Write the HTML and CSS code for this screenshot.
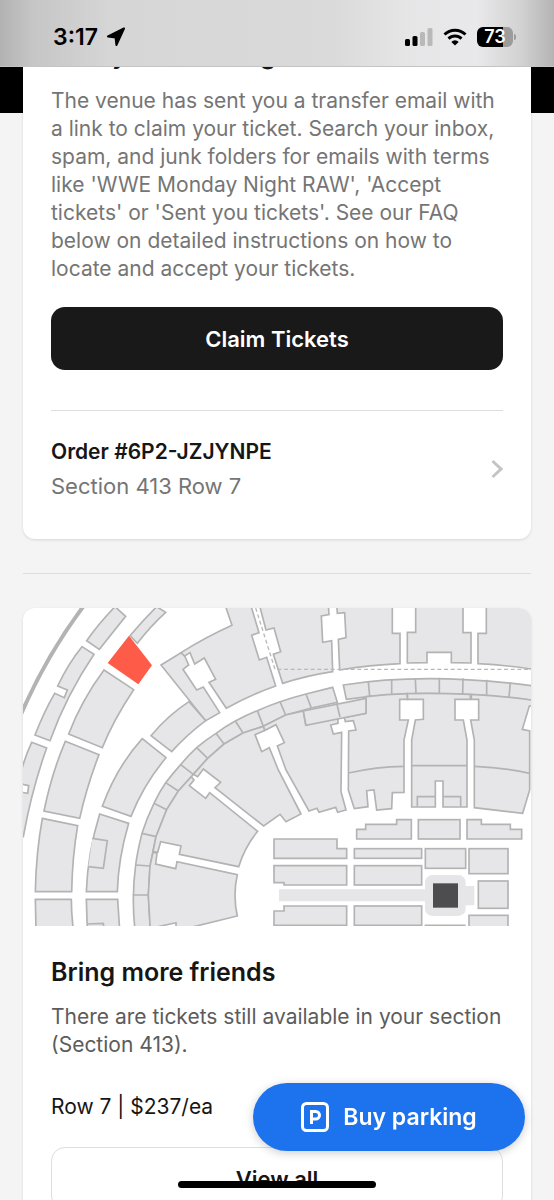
FILE: index.html
```html
<!DOCTYPE html>
<html lang="en">
<head>
  <meta charset="UTF-8">
  <meta name="viewport" content="width=device-width, initial-scale=1.0">
  <title>Your tickets</title>
  <link rel="stylesheet" href="styles.css">
</head>
<body>
  <header class="status-bar">
    <div class="status-group">
      <span class="time">3:17</span>
      <svg class="location" width="20" height="20" viewBox="0 0 20 20" aria-hidden="true">
        <path d="M18 1.500 2 9.500 9.600 10.600 10.400 18Z"/>
      </svg>
    </div>
    <div class="status-group">
      <svg width="28" height="18" viewBox="0 0 28 18" aria-hidden="true">
        <rect x="0" y="11" width="5" height="7" rx="1.500"/>
        <rect x="7.500" y="8" width="5" height="10" rx="1.500"/>
        <rect class="dim" x="15" y="4" width="5" height="14" rx="1.500"/>
        <rect class="dim" x="22.500" y="0" width="5" height="18" rx="1.500"/>
      </svg>
      <svg class="wifi" width="24" height="18" viewBox="0 0 24 18" aria-hidden="true">
        <path class="wave" d="M1.500 6.500a15 15 0 0 1 21 0M5.500 10.600a9.200 9.200 0 0 1 13 0"/>
        <path d="M12 17.600 8.300 13.900a5.200 5.200 0 0 1 7.400 0z"/>
      </svg>
      <div class="battery">73</div>
    </div>
  </header>

  <main class="page">
    <section class="card claim">
      <h2 class="title">Ready for claiming</h2>
      <p class="text muted">The venue has sent you a transfer email with a link to claim your ticket. Search your inbox, spam, and junk folders for emails with terms like 'WWE Monday Night RAW', 'Accept tickets' or 'Sent you tickets'. See our FAQ below on detailed instructions on how to locate and accept your tickets.</p>
      <button type="button" class="btn btn-dark">Claim Tickets</button>
      <a href="#" class="order">
        <span>
          <strong class="order-number">Order #6P2-JZJYNPE</strong>
          <span class="order-seat">Section 413 Row 7</span>
        </span>
        <svg width="12" height="20" viewBox="0 0 12 20" aria-hidden="true">
          <path d="M1.500 2 10 10l-8.500 8"/>
        </svg>
      </a>
    </section>

    <hr class="divider">

    <section class="card">
      <svg class="map" viewBox="9 24 1524 954" role="img" aria-label="Seat map">
        <path class="wall" d="M194 14Q80 165 2 345"/>

        <!-- outer rings -->
        <g class="seats">
          <path d="M285 20 317 49 238 148 200 122Q235 72 285 20Z"/>
          <path d="M186 140 222 163Q140 285 90 422L45 405Q72 335 104 280L133 293 142 270 113 258Q145 190 186 140Z"/>
          <path d="M35 427 80 444Q35 570 10 710L-10 710V574L23 580 26 557-5 550Q10 480 35 427Z"/>
          <path d="M252 210 341 269Q280 360 247 443L146 402Q185 300 252 210Z"/>
          <path d="M136 424 237 464Q200 560 179 655L72 633Q95 520 136 424Z"/>
          <path d="M67 655 173 677Q157 770 155 875H46Q48 760 67 655Z"/>
          <path d="M46 898H154Q154 940 160 990H48Z"/>
          <path d="M410 20 437 37Q390 80 352 130L330 107Q370 60 410 20Z"/>
          <path d="M423 195 483 158 494 168 506 195 489 208 530 270 550 261 599 338 557 362Z"/>
          <path d="M483 158Q560 110 636 76L615 14H692L717 98 695 106 718 180 740 172 767 258Q690 285 619 325L567 247 587 238 553 174 524 192 510 158 494 168Z"/>
          <path d="M507 305 557 362Q500 405 455 455L393 407Q445 345 507 305Z"/>
          <path d="M367 416 438 473Q370 555 333 649L247 619Q290 500 367 416Z"/>
          <path d="M239 642 326 670Q295 775 292 875H199Q203 760 239 642Z"/>
          <path d="M217 715 262 722 250 805 205 800"/>
          <path d="M199 898H293L299 990H202Z"/>
          <path d="M202 972 250 970 252 990"/>
          <path d="M718 14 738 90 762 84 782 155 760 163 788 250Q860 227 938 215L935 122 908 127 904 48 927 44 925 14Z"/>
          <path d="M950 14 952 40 974 38 978 113 955 118 959 210Q1050 195 1140 191V100H1117V14Z"/>
          <path d="M1187 14V97H1162V189L1221 188V157H1294V188L1353 189V98H1329V14Z"/>
          <path d="M1399 14V100H1374V191Q1455 195 1540 208V14Z"/>
        </g>
        <path class="dashes" d="M707 24 765 208H1540"/>

        <!-- suites -->
        <g class="seats">
          <path d="M345 990Q334 890 347 795 352 755 366 700 380 655 402 610 417 577 437 548 457 522 482 494 505 466 530 443 557 420 588 400 615 380 646 363 680 345 712 332 780 302 858 282L938 262 952 307 874 324 797 345 730 379 669 399 612 432 563 475 520 523 475 573 440 629 408 710 390 798 385 885 391 990Z"/>
          <path d="M338 885H385M347 795 390 798M366 700 408 710M402 610 440 629M437 548 475 573M482 494 520 523M530 443 563 475M588 400 612 432M646 363 669 399M712 332 730 379M780 305 797 345M858 282 874 324"/>
          <path d="M970 255Q1220 215 1540 258V301Q1220 262 979 298Z"/>
          <path d="M1045 245 1049 289M1115 238V284M1186 235 1188 282M1258 233V281M1329 235 1328 283M1400 239V285M1471 247 1467 291"/>
        </g>

        <!-- lower bowl -->
        <g class="seats">
          <path d="M391 990 385 885 390 798 399 757 411 759 407 792 467 806 471 785 652 824Q638 885 652 948L480 990H468V968L405 982Z"/>
          <path d="M399 755 413 757 422 725 483 738 478 763 656 800Q675 740 713 694L569 578 557 595 508 557 522 540 514 530 475 573 440 629 408 710Z"/>
          <path d="M520 523 563 475 612 432 669 399 730 379 735 391 705 404 725 455 748 443 775 510 843 642 798 665 780 643 731 678 585 563 602 547 550 507 533 530Z"/>
          <path d="M730 379 797 345 850 333 857 375 953 352 954 370 932 375 940 402 965 397 963 575 978 630 953 637 947 622 897 637 891 625 867 633 798 510 772 438 793 428 768 374 735 391Z"/>
          <path d="M1038 290Q1100 283 1162 281V298H1139V360H1165L1152 420V577L1117 578 1115 626 1070 630 1062 570 1040 572 1044 620 1003 626 985 570 986 393 1008 390 1000 362 976 365 973 352 1038 340Z"/>
          <path d="M850 333 1038 295V340L858 376ZM950 309 960 351"/>
          <path d="M1162 281Q1250 279 1351 283V298H1305V360H1330L1341 420V621H1269V543H1246V621H1175V420L1186 360 1210 358V298H1163Z"/>
          <path d="M1192 621V590H1246M1269 590H1322V621"/>
          <path d="M1354 283Q1450 288 1540 301V318H1528L1507 388 1529 393V570L1508 640 1363 623V420L1352 360H1376V298H1354Z"/>
          <path class="line" d="M985 519Q1070 500 1152 499M1175 497H1341M1363 499Q1450 502 1529 520"/>
        </g>

        <!-- floor -->
        <g class="seats">
          <path d="M762 717H951V746H980V775H762Z"/>
          <path d="M762 797H980V855H792V848H762Z"/>
          <path d="M762 933H792V918H980V976H762Z"/>
          <path d="M1010 717V688H1037V673H1130V659H1174V717Z"/>
          <path d="M1341 659H1384V673H1471V688H1505V717H1341Z"/>
          <rect x="1195" y="659" width="125" height="58"/>
          <rect x="1003" y="746" width="202" height="29"/>
          <rect x="1003" y="797" width="202" height="58"/>
          <rect x="1003" y="918" width="202" height="58"/>
          <rect x="1216" y="746" width="121" height="59"/>
          <rect x="1347" y="746" width="117" height="75"/>
          <rect x="1375" y="843" width="89" height="82"/>
          <rect x="1347" y="946" width="117" height="50"/>
          <path d="M1214 976H1337"/>
        </g>
        <path class="stage" d="M777 868H1217V904H777ZM1320 858H1363V916H1320Z"/>
        <rect class="stage" x="1215" y="825" width="122" height="123" rx="22"/>
        <rect class="ring" x="1239" y="850" width="75" height="73"/>
        <path class="selected" d="M327 107 396 196 355 253 263 189Z"/>
      </svg>
      <div class="more">
        <h2 class="title">Bring more friends</h2>
        <p class="text">There are tickets still available in your section (Section 413).</p>
        <p class="price">Row 7 | $237/ea</p>
        <button type="button" class="btn btn-outline">View all</button>
      </div>
    </section>
  </main>

  <button type="button" class="parking">
    <svg width="28" height="30" viewBox="0 0 28 30" aria-hidden="true">
      <rect x="1.500" y="1.500" width="25" height="27" rx="4"/>
      <path d="M10.500 22V9.500h4.200a3.800 3.800 0 0 1 0 7.600h-4.200"/>
    </svg>
    Buy parking
  </button>
  <div class="home-indicator"></div>
</body>
</html>
```
FILE: styles.css
```css
* {
  box-sizing: border-box;
  margin: 0;
  padding: 0;
}

body {
  height: 100vh;
  overflow: hidden;
  background-color: #f4f4f4;
  color: #161616;
  font-family: "Inter", "Liberation Sans", sans-serif;
}

button {
  font-family: inherit;
  cursor: pointer;
}

.status-bar {
  position: relative;
  z-index: 2;
  height: 67px;
  padding: 8px 41px 0 53px;
  display: flex;
  align-items: center;
  justify-content: space-between;
  background: linear-gradient(90deg, #b2b2b2 0, #c6c6c6 6%, #d6d6d6 20%, #dadada 60%, #e6e6e7 74%, #e9e9eb 86%, #d2d2d2 94%, #b4b4b4 100%);
  border-bottom: 1px solid #c4c4c4;
}

.status-group {
  display: flex;
  align-items: center;
  gap: 10px;

  & .time {
    font-size: 23px;
    font-weight: 600;
    color: black;
  }

  & .location {
    margin-left: -2px;
    stroke: black;
    stroke-width: 2;
    stroke-linejoin: round;
  }

  & .dim {
    fill: #b9b9b9;
  }

  & .wave {
    fill: none;
    stroke: black;
    stroke-width: 3;
  }
}

.battery {
  position: relative;
  width: 36px;
  height: 20px;
  border-radius: 6px;
  background: linear-gradient(90deg, black 73%, #9c9c9c 73%);
  color: white;
  font-size: 18px;
  font-weight: 600;
  line-height: 20px;
  text-align: center;

  &::after {
    content: "";
    position: absolute;
    left: 37px;
    top: 7px;
    width: 2px;
    height: 6px;
    border-radius: 0 2px 2px 0;
    background-color: #9c9c9c;
  }
}

.page {
  padding: 0 23px;
  background: linear-gradient(black 46px, #f4f4f4 46px);
}

.card {
  background-color: white;
  border-radius: 12px;
  box-shadow: 0 1px 3px rgba(0, 0, 0, 0.12);
  overflow: hidden;
}

.claim {
  border-radius: 0 0 12px 12px;
  padding: 0 28px 36px;

  & .title {
    margin-top: -28px;
  }

  & .text {
    margin: 16px 0 24px;
  }
}

.title {
  font-size: 25px;
  font-weight: 600;
  line-height: 32px;
}

.text {
  font-size: 21px;
  line-height: 28px;
  color: #5c5c5c;
}

.muted {
  color: #757575;
}

.btn {
  display: block;
  width: 100%;
  height: 63px;
  border: none;
  border-radius: 14px;
  font-size: 22px;
  font-weight: 600;
}

.btn-dark {
  background-color: #191919;
  color: white;
}

.btn-outline {
  background-color: white;
  border: 1px solid #dedede;
  color: #161616;
}

.order {
  display: flex;
  align-items: center;
  justify-content: space-between;
  margin-top: 40px;
  padding-top: 24px;
  border-top: 1px solid #dedede;
  color: #161616;
  text-decoration: none;

  & svg {
    fill: none;
    stroke: #c4c4c4;
    stroke-width: 3;
  }
}

.order-number {
  display: block;
  font-size: 21px;
  font-weight: 600;
  line-height: 34px;
}

.order-seat {
  display: block;
  font-size: 22px;
  line-height: 34px;
  color: #757575;
}

.divider {
  margin: 34px 0;
  border: none;
  border-top: 1px solid #dedede;
}

.map {
  display: block;
  width: 100%;

  & .seats {
    fill: #e6e6e8;
    stroke: #b3b3b4;
    stroke-width: 5;
  }

  & .line {
    fill: none;
  }

  & .wall {
    fill: none;
    stroke: #b3b3b4;
    stroke-width: 12;
  }

  & .dashes {
    fill: none;
    stroke: #b9b9ba;
    stroke-width: 4;
    stroke-dasharray: 12 8;
  }

  & .stage {
    fill: #e6e6e8;
  }

  & .ring {
    fill: #4d4d4d;
  }

  & .selected {
    fill: #ff5b49;
  }
}

.more {
  padding: 30px 28px;

  & .text {
    margin-top: 15px;
  }

  & .price {
    margin: 32px 0 24px;
    font-size: 21px;
    line-height: 32px;
  }
}

.parking {
  position: fixed;
  right: 29px;
  bottom: 49px;
  display: flex;
  align-items: center;
  justify-content: center;
  gap: 14px;
  width: 272px;
  height: 68px;
  border: none;
  border-radius: 34px;
  background-color: #1d72ee;
  box-shadow: 0 2px 10px rgba(0, 0, 0, 0.2);
  color: white;
  font-size: 23px;
  font-weight: 600;

  & svg {
    fill: none;
    stroke: white;
    stroke-width: 3;
  }
}

.home-indicator {
  position: fixed;
  left: 50%;
  bottom: 12px;
  width: 198px;
  height: 7px;
  margin-left: -99px;
  border-radius: 4px;
  background-color: black;
}
```
